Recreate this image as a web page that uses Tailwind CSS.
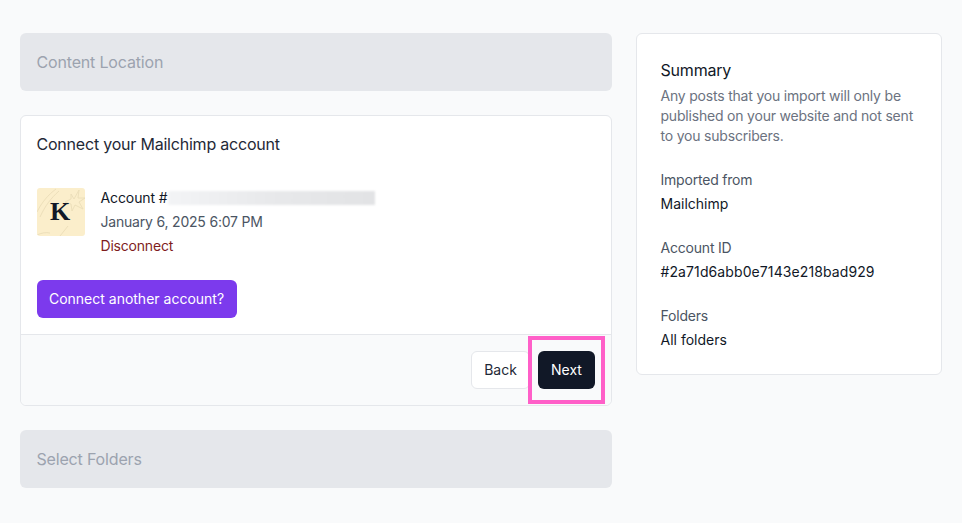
<!DOCTYPE html>
<html lang="en">
<head>
  <meta charset="UTF-8" />
  <title>Import</title>
  <script src="https://cdn.jsdelivr.net/npm/@tailwindcss/browser@4"></script>
</head>
<body class="bg-[#f9fafb] font-['Inter',sans-serif] text-[14px] leading-[20px] text-[#111827] overflow-hidden">
  <div class="h-[523px] w-[962px] flex gap-6 pl-5 pr-5 pt-[33px]">

    <!-- Steps -->
    <div class="w-[592px] flex flex-col gap-6">
      <div class="h-[58px] bg-[#e5e7eb] rounded-md flex items-center pl-[16.5px] text-[16px] tracking-[-0.17px] text-[#9ca3af]">Content Location</div>

      <div class="relative bg-white border border-[#e5e7eb] rounded-md h-[291px] flex flex-col">
        <div class="flex-1 pl-[15.5px] pr-4 pt-4">
          <h2 class="text-[16px] leading-[24px] tracking-[-0.21px] text-[#1f2937]">Connect your Mailchimp account</h2>
          <div class="flex gap-4 mt-[32px]">
            <!-- account avatar -->
            <div class="w-12 h-12 rounded-[3px] bg-[#fbeecb] overflow-hidden relative flex items-center justify-center">
              <svg class="absolute inset-0" width="48" height="48" viewBox="0 0 48 48" fill="none" stroke="#eadcb8" stroke-width="0.9">
                <path d="M0 24 C5 14 11 7 19 1" />
                <path d="M3 29 C8 18 14 10 22 3" />
                <path d="M34 6 L37 11 L42 2 L41 10 L48 10 L42 14 L46 21 L38 17 L35 23 L34 16 L28 14 L34 11 Z" />
                <path d="M23 48 L31 38" />
                <path d="M0 47 C4 45 9 44 13 45" />
              </svg>
              <span class="relative font-['Liberation_Serif',serif] font-bold text-[26px] leading-none text-[#111827] -ml-px">K</span>
            </div>
            <div class="flex flex-col gap-1 tracking-[-0.2px]">
              <div class="flex items-center h-5">
                <span class="tracking-[-0.1px]">Account #</span>
                <span class="w-[207px] h-[14px] blur-[1px] bg-gradient-to-r from-[#f3f4f6] via-[#e8e9eb] to-[#e2e3e5]"></span>
              </div>
              <div class="text-[#4b5563]">January 6, 2025 6:07 PM</div>
              <div class="text-[#7f1d1d]">Disconnect</div>
            </div>
          </div>
          <button class="mt-[24px] h-[38px] w-[200px] rounded-md bg-[#7c3aed] text-white">Connect another account?</button>
        </div>
        <div class="h-[71px] bg-[#f9fafb] border-t border-[#e5e7eb] rounded-b-md flex justify-end items-center gap-[8px] px-4">
          <button class="h-[38px] w-[59px] bg-white border border-[#e5e7eb] rounded-md text-[#1f2937]">Back</button>
          <button class="h-[38px] w-[57px] bg-[#111827] rounded-md text-white">Next</button>
        </div>
        <!-- highlight box around Next -->
        <div class="absolute left-[507px] top-[220px] w-[77px] h-[68px] border-[4px] border-[#ff5fc8]"></div>
      </div>

      <div class="h-[58px] bg-[#e5e7eb] rounded-md flex items-center pl-[16.5px] text-[16px] tracking-[-0.17px] text-[#9ca3af]">Select Folders</div>
    </div>

    <!-- Summary -->
    <aside class="w-[306px] h-[342px] bg-white border border-[#e5e7eb] rounded-md pl-[23.5px] pr-6 pt-6">
      <h3 class="text-[16px] leading-[24px] tracking-[-0.2px]">Summary</h3>
      <p class="mt-1 text-[#6b7280] tracking-[-0.2px]">Any posts that you import will only be published on your website and not sent to you subscribers.</p>
      <div class="mt-[24px] text-[#4b5563] tracking-[-0.2px]">Imported from</div>
      <div class="mt-1">Mailchimp</div>
      <div class="mt-[24px] text-[#4b5563] tracking-[-0.2px]">Account ID</div>
      <div class="mt-1 tracking-[0.1px]">#2a71d6abb0e7143e218bad929</div>
      <div class="mt-[24px] text-[#4b5563] tracking-[-0.2px]">Folders</div>
      <div class="mt-1">All folders</div>
    </aside>
  </div>
</body>
</html>
